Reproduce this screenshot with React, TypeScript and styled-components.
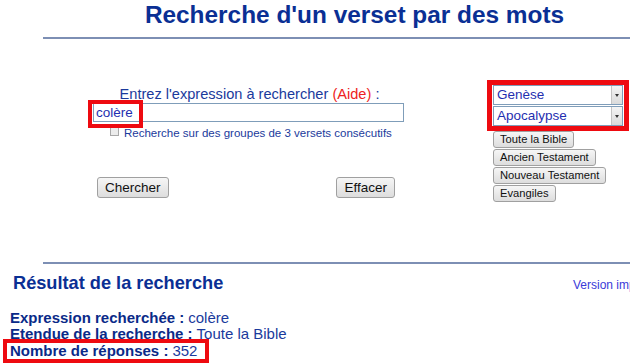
import React from 'react';
import styled, { createGlobalStyle } from 'styled-components';

export const GlobalStyle = createGlobalStyle`
  html, body {
    margin: 0;
    padding: 0;
    background: #ffffff;
    overflow: hidden;
    font-family: "Liberation Sans", Arial, sans-serif;
  }
`;

const Page = styled.div`
  width: 680px;
`;

const Header = styled.div`
  margin-left: 43px;
  width: 623px;
`;

const Title = styled.h1`
  margin: 0;
  text-align: center;
  font-size: 24.4px;
  font-weight: bold;
  color: #0a2f94;
  line-height: 30px;
`;

//ligne de séparation
const Rule = styled.div<{ $top: number }>`
  height: 2px;
  background: #7d8fb4;
  margin-top: ${(p) => p.$top}px;
`;

const FormArea = styled.div`
  display: flex;
  margin-top: 41px;
  height: 182px;
`;

const LeftCol = styled.div`
  margin-left: 93px;
  width: 311px;
  display: flex;
  flex-direction: column;
  padding-top: 6px;
`;

const Label = styled.div`
  text-align: center;
  font-size: 14.6px;
  color: #1a3a9c;
  line-height: 16px;
  padding-left: 2px;
`;

const Red = styled.span`
  color: #ee2222;
`;

const InputWrap = styled.div`
  position: relative;
  margin-top: 1px;
`;

const TextInput = styled.div`
  height: 19px;
  border: 1px solid #7f9db9;
  box-sizing: border-box;
  font-size: 13.5px;
  color: #1f2fb0;
  padding-left: 2px;
  line-height: 17px;
`;

//cadre rouge d'annotation
const Mark = styled.div`
  position: absolute;
  left: -5px;
  top: -3px;
  width: 55px;
  height: 28px;
  border: 4px solid #ee0a10;
  box-sizing: border-box;
`;

const CheckRow = styled.div`
  display: flex;
  align-items: center;
  margin-top: 4px;
  margin-left: 17px;
  font-size: 11.5px;
  color: #1a3a9c;
  line-height: 14px;
`;

const CheckBox = styled.span`
  width: 7px;
  height: 7px;
  border: 1px solid #a8a8a8;
  background: #ececec;
  margin-right: 5px;
  margin-top: -4px;
`;

const ButtonRow = styled.div`
  display: flex;
  justify-content: space-between;
  margin-top: 37px;
  padding: 0 9px 0 4px;
`;

const Button = styled.button<{ $small?: boolean }>`
  font-family: "Liberation Sans", Arial, sans-serif;
  font-size: ${(p) => (p.$small ? '11.2px' : '13.5px')};
  height: ${(p) => (p.$small ? '17px' : '21px')};
  padding: ${(p) => (p.$small ? '0 6px' : '0 7px')};
  color: #111;
  background: linear-gradient(#f6f6f6, #dddddd);
  border: 1px solid #a0a0a0;
  border-radius: 3px;
  line-height: 1;
`;

const RightCol = styled.div`
  margin-left: 83px;
  display: flex;
  flex-direction: column;
  align-items: flex-start;
`;

const SelectBox = styled.div`
  border: 5px solid #ee0a10;
  padding: 0 1px;
  width: 130px;
`;

const Select = styled.div`
  display: flex;
  height: 20px;
  border: 1px solid #7f9db9;
  box-sizing: border-box;
  font-size: 13.5px;
  color: #1f2fb0;
  line-height: 18px;
  & + & {
    margin-top: 1px;
  }
`;

const SelectText = styled.div`
  flex: 1;
  padding-left: 3px;
`;

const Arrow = styled.div`
  width: 10px;
  border-left: 1px solid #c4c4c4;
  background: linear-gradient(#f4f4f4, #dadada);
  display: flex;
  align-items: center;
  justify-content: center;
  &::after {
    content: '';
    border-left: 2px solid transparent;
    border-right: 2px solid transparent;
    border-top: 3px solid #333;
  }
`;

const SmallButtons = styled.div`
  display: flex;
  flex-direction: column;
  align-items: flex-start;
  gap: 1px;
  margin-left: 6px;
`;

const ResultHead = styled.div`
  display: flex;
  justify-content: space-between;
  align-items: baseline;
  padding: 8px 0 0 13px;
  width: 662px;
`;

const ResultTitle = styled.h2`
  margin: 0;
  font-size: 18.2px;
  line-height: 22px;
  font-weight: bold;
  color: #0a2f94;
`;

const PrintLink = styled.a`
  font-size: 12px;
  color: #3a3ad8;
`;

const Infos = styled.div`
  margin-top: 16px;
  padding-left: 10px;
  font-size: 15px;
  line-height: 16px;
  color: #1a3a9c;
`;

const InfoLine = styled.div`
  display: flex;
  width: fit-content;
  gap: 4px;
  & b {
    color: #0a2a88;
  }
`;

const CountLine = styled(InfoLine)`
  border: 4px solid #ee0a10;
  margin-left: -7px;
  padding: 0 8px 0 3px;
  margin-top: -3px;
`;

function App() {
  return (
    <Page>
      <GlobalStyle />
      <Header>
        <Title>Recherche d'un verset par des mots</Title>
        <Rule $top={7} />
      </Header>
      <FormArea>
        <LeftCol>
          <Label>
            Entrez l'expression à rechercher <Red>(Aide)</Red> :
          </Label>
          <InputWrap>
            <TextInput>colère</TextInput>
            <Mark />
          </InputWrap>
          <CheckRow>
            <CheckBox />
            Recherche sur des groupes de 3 versets consécutifs
          </CheckRow>
          <ButtonRow>
            <Button>Chercher</Button>
            <Button>Effacer</Button>
          </ButtonRow>
        </LeftCol>
        <RightCol>
          <SelectBox>
            <Select>
              <SelectText>Genèse</SelectText>
              <Arrow />
            </Select>
            <Select>
              <SelectText>Apocalypse</SelectText>
              <Arrow />
            </Select>
          </SelectBox>
          <SmallButtons>
            <Button $small>Toute la Bible</Button>
            <Button $small>Ancien Testament</Button>
            <Button $small>Nouveau Testament</Button>
            <Button $small>Evangiles</Button>
          </SmallButtons>
        </RightCol>
      </FormArea>
      <Header>
        <Rule $top={0} />
      </Header>
      <ResultHead>
        <ResultTitle>Résultat de la recherche</ResultTitle>
        <PrintLink>Version imprimable</PrintLink>
      </ResultHead>
      <Infos>
        <InfoLine>
          <b>Expression recherchée :</b> colère
        </InfoLine>
        <InfoLine>
          <b>Etendue de la recherche :</b> Toute la Bible
        </InfoLine>
        <CountLine>
          <b>Nombre de réponses :</b> 352
        </CountLine>
      </Infos>
    </Page>
  );
}

export default App;
